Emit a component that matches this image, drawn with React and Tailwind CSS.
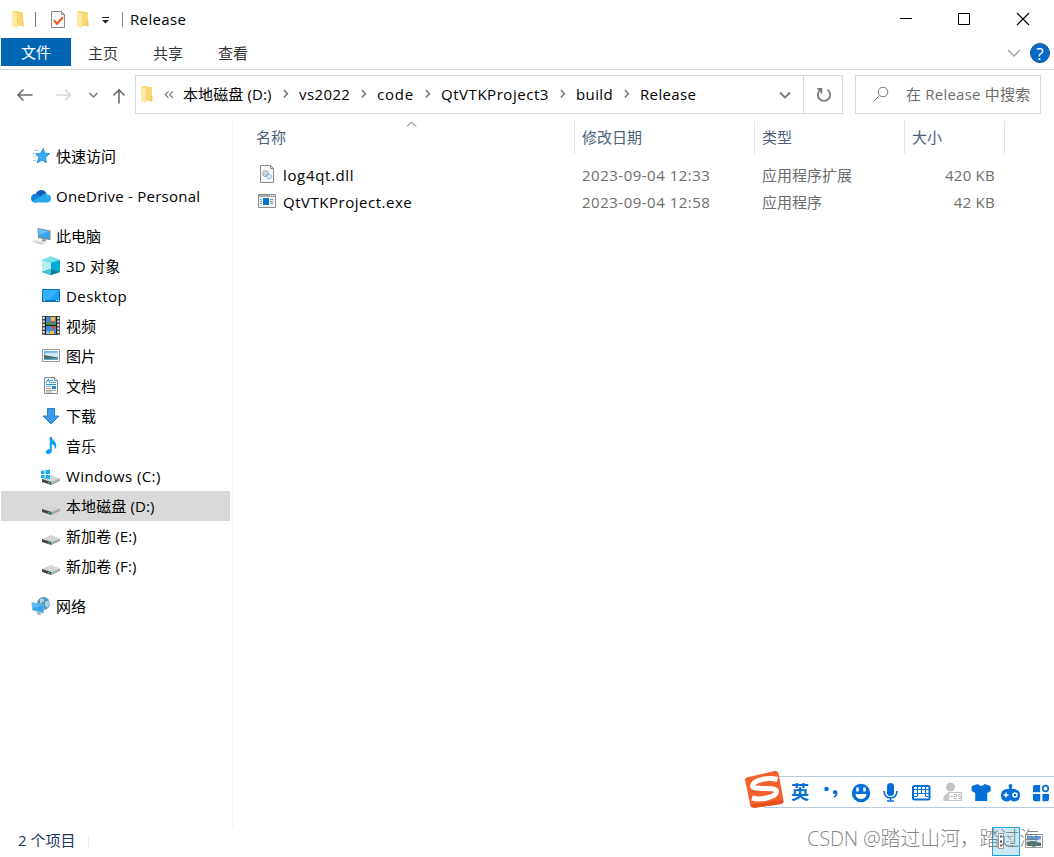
// src/App.jsx

const FolderIcon = () => (
  <svg width="13" height="19" viewBox="0 0 13 19" className="shrink-0">
    <path d="M1 1h5l1 1h4.500v14H6V4z" fill="#f0c75a" />
    <path d="M1 1h5l6 2v13H1z" fill="#f8d775" />
    <path d="M1 1l5 3v14.500L1 16z" fill="#ffe8a3" />
    <path d="M11 11h1.500v5.500H11z" fill="#efc55c" />
  </svg>
);

const TaskIcon = () => (
  <svg width="16" height="19" viewBox="0 0 16 19" className="shrink-0">
    <path d="M1.500 1.500h10l3 3v13h-13z" fill="#f7f7f7" stroke="#8a8a8a" />
    <path d="M11.500 1.500v3h3" fill="none" stroke="#8a8a8a" />
    <path d="M4 10.500l3 3.200 6-6.500" fill="none" stroke="#f05a1a" strokeWidth="2" />
  </svg>
);

const Chevron = () => (
  <svg width="27" height="12" viewBox="0 0 27 12" className="shrink-0">
    <path d="M11.800 2l3.700 3.700-3.700 3.700" fill="none" stroke="#777" strokeWidth="1.500" />
  </svg>
);

const StarIcon = () => (
  <svg width="20" height="20" viewBox="0 0 20 20">
    <path d="M12.500 2.500l1 4.700 5.300.3-4.300 3.500.8 5.700-4.200-2.600-5 2.900 1.800-5.700-3.300-3.500 4.700-.3z" fill="#3aaaf3" stroke="#1580c8" strokeWidth=".8" />
    <path d="M3 4.500h5M2 7.500h2.500M2.500 11h3M2 14.500h3" stroke="#9ccff2" />
  </svg>
);

const CloudIcon = () => (
  <svg width="20" height="20" viewBox="0 0 20 20">
    <path d="M5 7.500C6.500 3.500 13 2 15.500 7.500L12 13 4 12z" fill="#0b5cb8" />
    <path d="M0 12.500c0-3.500 3-5.500 6-4.500l7 5.500-8 3C2 16.500 0 15 0 12.500z" fill="#1480d8" />
    <path d="M9.500 10.500c2-3 5-3.500 6.500-2 3 0 4 2 4 4 0 2.500-1.700 4-4 4H4c-1.500 0-2.500-.7-3-1.500z" fill="#28a8ea" />
  </svg>
);

const PcIcon = () => (
  <svg width="20" height="20" viewBox="0 0 20 20">
    <path d="M6.500 2L19.500 4.500v9.800L7 12z" fill="#7b868e" />
    <path d="M7.500 3L18.500 5.300v7.700L8 11z" fill="#37a5ee" />
    <path d="M7.500 3L18.500 5.300 8 9z" fill="#66c2fb" />
    <path d="M12 13l3 .5v2l-5-.6z" fill="#8e989f" />
    <path d="M0 15.500l5-1.500 10 2.200-4 2.500z" fill="#c9ced2" />
    <path d="M2 15.800l3-.9 8 1.700" fill="none" stroke="#eee" />
  </svg>
);

const CubeIcon = () => (
  <svg width="20" height="20" viewBox="0 0 20 20">
    <path d="M1 4l9-3.500L19 4v12l-9 3-9-3z" fill="#33bfd0" />
    <path d="M1 4l9-3.500L19 4l-9 3z" fill="#77e2e6" />
    <path d="M1 4l9 3v6l-9 3z" fill="#b4eff0" />
    <path d="M19 4l-9 3v6l9 3z" fill="#05a9d6" />
    <path d="M1 16l9-3 9 3-9 3z" fill="#137c92" />
    <path d="M1 16l9-3v6z" fill="#43c9d2" />
  </svg>
);

const DesktopIcon = () => (
  <svg width="20" height="20" viewBox="0 0 20 20">
    <path d="M1.500 3.500h17v12h-17z" fill="#1ba1f9" stroke="#0873bd" />
    <path d="M2 4h16L8 14H2z" fill="#35b0ff" />
    <path d="M2 14h16v1.500H2z" fill="#0873bd" />
    <path d="M3 14.500h1m11 0h1m1 0h1" stroke="#fff" />
  </svg>
);

const VideoIcon = () => (
  <svg width="20" height="20" viewBox="0 0 20 20">
    <path d="M1 0h18v19H1z" fill="#4c4c4c" />
    <path d="M2.700 1v18M17.300 1v18" stroke="#e5e5e5" strokeWidth="2" strokeDasharray="2 1.500" />
    <path d="M5 1h10v8H5zM5 10h10v8H5z" fill="#4a86dc" />
    <path d="M4.500 0v19M15.500 0v19M4.500 9.500h11" stroke="#222" />
    <path d="M5 7l4-1 2 2 4-1v2H5z" fill="#43903b" />
    <path d="M10 1h4v4h-4zM9 15h4v3H9z" fill="#efc12b" />
    <path d="M10 5h3v2h-3zM11 10h3v3h-3z" fill="#e24b2c" />
    <path d="M5 16l2-1 2 3H5z" fill="#92c7ee" />
  </svg>
);

const PictureIcon = () => (
  <svg width="20" height="20" viewBox="0 0 20 20">
    <path d="M1.500 3.500h17v12h-17z" fill="#fff" stroke="#999" />
    <path d="M3 5h14v9H3z" fill="#6eb5ed" />
    <path d="M3 8.500c3-3 7-1 14-2V12H3z" fill="#cfe9f5" />
    <path d="M3 9l5 1 9 1.500V14H3z" fill="#416c67" />
    <path d="M3 13l14-1v2H3z" fill="#5fa5b8" />
  </svg>
);

const DocIcon = () => (
  <svg width="20" height="20" viewBox="0 0 20 20">
    <path d="M3.500 1.500h10l3 3v13h-13z" fill="#fafafa" stroke="#888" />
    <path d="M13.500 1.500v3h3" fill="#ddd" stroke="#888" />
    <path d="M5 7l2.500-4 1 4M9 4.500h3M10 6.500h5M5 8.500h10" fill="none" stroke="#1895dc" />
    <path d="M5 10.500h5M5 12.500h5M5 14.500h10M5 16h6" stroke="#a5a5a5" />
    <path d="M11 10h4v3h-4z" fill="#3189cb" />
  </svg>
);

const DownloadIcon = () => (
  <svg width="20" height="20" viewBox="0 0 20 20">
    <path d="M6.500 2.500h7v7.500h4.500L10 18 2 10h4.500z" fill="#3c9be9" stroke="#2078c4" strokeWidth=".9" />
  </svg>
);

const MusicIcon = () => (
  <svg width="20" height="20" viewBox="0 0 20 20">
    <path d="M8.800 1h2c.3 3.300 4.700 4.500 4.500 9-.1 1.400-.7 2.300-1.500 3 .3-3-.8-4.300-3-5v6.500c0 2.500-2 3.700-4 3.500-2-.2-2.500-2-1.300-3.500.9-1.200 2.300-1.500 3.300-1.200z" fill="#069df7" />
  </svg>
);

const DriveIcon = ({ windows }) => (
  <svg width="20" height="20" viewBox="0 0 20 20">
    <path d="M1 13l9-4 9 3.500-8.500 3.500z" fill="#d4d5d6" />
    <path d="M1 13l9.500 3v3L1 16z" fill="#3e4345" />
    <path d="M10.500 16l8.500-3.500V15l-8.500 4z" fill="#a4a7a9" />
    <path d="M7 16l2 .6v1.200L7 17z" fill="#36e34f" />
    {windows && (
      <path d="M0 5l3.500-.6V8H0zM4.500 4.200L9 3.500V8H4.500zM0 9h3.500v3.400L0 12zM4.500 9H9v4l-4.500-.6z" fill="#14b1ec" />
    )}
  </svg>
);

const NetworkIcon = () => (
  <svg width="20" height="20" viewBox="0 0 20 20">
    <circle cx="12.500" cy="7.500" r="6.500" fill="#5797bf" />
    <path d="M9 3c2-1 5 0 4 2s-3 1-4 3zM14 6l4-2 1 4-3 4-2-3z" fill="#a9d4e4" />
    <path d="M1 6.500L12.500 9v8L1.500 14z" fill="#35a4ed" stroke="#78bfe7" strokeWidth=".8" />
    <path d="M1.500 7L12 9.500 2 12z" fill="#5cbcf7" />
    <path d="M5 16.500l3-.5 3 2-3 1z" fill="#a3abb0" />
  </svg>
);

const DllIcon = () => (
  <svg width="20" height="20" viewBox="0 0 20 20">
    <path d="M3.500 .5h10l3 3v14h-13z" fill="#f8f8f8" stroke="#8b8b8b" />
    <path d="M13.500 .5v3h3" fill="none" stroke="#8b8b8b" />
    <circle cx="8.500" cy="8.500" r="2.700" fill="none" stroke="#8d969c" strokeWidth="1.500" strokeDasharray="1.300 .7" />
    <circle cx="8.500" cy="8.500" r="1" fill="none" stroke="#8d969c" strokeWidth=".7" />
    <circle cx="12" cy="11.500" r="2.200" fill="none" stroke="#78a9d0" strokeWidth="1.300" strokeDasharray="1.200 .6" />
  </svg>
);

const ExeIcon = () => (
  <svg width="20" height="20" viewBox="0 0 20 20">
    <path d="M1.500 2.500h17v13h-17z" fill="#f4f4f4" stroke="#8a8f94" />
    <path d="M2 3h16v2H2z" fill="#a5a9ad" />
    <path d="M13 3.500h1m1 0h1m1 0h1" stroke="#fff" />
    <path d="M6 6h6v7H6z" fill="#0877d2" />
    <path d="M3 7.500h2M3 9.500h2M3 11.500h2M13 7.500h3M13 9.500h3M13 11.500h3" stroke="#7893ab" />
  </svg>
);

const navItems = [
  { label: "快速访问", icon: <StarIcon />, cls: "ml-[31px] mb-[10px]" },
  { label: "OneDrive - Personal", icon: <CloudIcon />, cls: "ml-[31px] mb-[10px]", text: "tracking-[0.24px]" },
  { label: "此电脑", icon: <PcIcon />, cls: "ml-[31px]" },
  { label: "3D 对象", icon: <CubeIcon />, cls: "ml-[41px]", text: "tracking-[0.2px]" },
  { label: "Desktop", icon: <DesktopIcon />, cls: "ml-[41px]", text: "tracking-[0.45px]" },
  { label: "视频", icon: <VideoIcon />, cls: "ml-[41px]" },
  { label: "图片", icon: <PictureIcon />, cls: "ml-[41px]" },
  { label: "文档", icon: <DocIcon />, cls: "ml-[41px]" },
  { label: "下载", icon: <DownloadIcon />, cls: "ml-[41px]" },
  { label: "音乐", icon: <MusicIcon />, cls: "ml-[41px]" },
  { label: "Windows (C:)", icon: <DriveIcon windows />, cls: "ml-[41px]", text: "tracking-[0.4px]" },
  { label: "本地磁盘 (D:)", icon: <DriveIcon />, cls: "ml-[41px]", text: "tracking-[0.1px]", active: true },
  { label: "新加卷 (E:)", icon: <DriveIcon />, cls: "ml-[41px]", text: "tracking-[0.1px]" },
  { label: "新加卷 (F:)", icon: <DriveIcon />, cls: "ml-[41px] mb-[10px]", text: "tracking-[0.15px]" },
  { label: "网络", icon: <NetworkIcon />, cls: "ml-[31px]" },
];

const crumbs = [
  { label: "本地磁盘 (D:)", cls: "w-[89px] tracking-[0.1px]" },
  { label: "vs2022", cls: "w-[51px] tracking-[0.4px]" },
  { label: "code", cls: "w-[37px] tracking-[0.8px]" },
  { label: "QtVTKProject3", cls: "w-[108px] tracking-[0.54px]" },
  { label: "build", cls: "w-[37px] tracking-[0.4px]" },
  { label: "Release", cls: "w-[56px] tracking-[0.35px]" },
];

const files = [
  { name: "log4qt.dll", date: "2023-09-04 12:33", type: "应用程序扩展", size: "420 KB", icon: <DllIcon />, text: "tracking-[0.65px]" },
  { name: "QtVTKProject.exe", date: "2023-09-04 12:58", type: "应用程序", size: "42 KB", icon: <ExeIcon />, text: "tracking-[0.52px]" },
];

const TitleBar = () => (
  <div className="flex h-[38px] items-center pl-[11px]">
    <FolderIcon />
    <div className="ml-[11px] h-[15px] w-px bg-[#777]" />
    <div className="ml-[14px]"><TaskIcon /></div>
    <div className="ml-[10px]"><FolderIcon /></div>
    <svg width="8" height="8" viewBox="0 0 8 8" className="ml-[13px] mt-1">
      <path d="M0 .5h7" stroke="#222" />
      <path d="M0 3h7L3.500 6.500z" fill="#222" />
    </svg>
    <div className="ml-[12px] h-[15px] w-px bg-[#888]" />
    <span className="ml-[7px] flex-1 tracking-[0.35px]">Release</span>
    <svg width="136" height="14" viewBox="0 0 136 14" className="mr-[19px]">
      <path d="M1 6.500h12" stroke="#000" />
      <path d="M59.500 1.500h11v11h-11z" fill="none" stroke="#000" />
      <path d="M118 1l12 12M130 1l-12 12" stroke="#000" strokeWidth="1.100" />
    </svg>
  </div>
);

const RibbonTabs = () => (
  <div className="flex h-8 items-start border-b border-[#dadbdc] pl-px text-[#333]">
    <div className="flex h-7 w-[70px] items-center justify-center bg-[#0066b4] text-white">文件</div>
    <span className="ml-[17px] mt-[5px]">主页</span>
    <span className="ml-[35px] mt-[5px]">共享</span>
    <span className="ml-[35px] mt-[5px]">查看</span>
    <svg width="14" height="9" viewBox="0 0 14 9" className="ml-auto mt-[11px]">
      <path d="M1 1l6 6 6-6" fill="none" stroke="#a2a2a2" strokeWidth="1.300" />
    </svg>
    <div className="ml-[9px] mr-[4px] mt-[5px] flex size-5 items-center justify-center rounded-full border border-[#0a56a0] bg-[#0669c8] text-[17px] font-medium leading-none text-white">?</div>
  </div>
);

const AddressBar = () => (
  <div className="flex h-[44px] pt-[5px]">
    <svg width="135" height="39" viewBox="0 0 135 39" className="shrink-0">
      <path d="M18 20h14.500M23.500 14.500L18 20l5.500 5.500" fill="none" stroke="#6b6b6b" strokeWidth="1.600" />
      <path d="M56 20h14.500M65 14.500l5.500 5.500-5.500 5.500" fill="none" stroke="#d5d5d5" strokeWidth="1.600" />
      <path d="M89.500 18l4 4 4-4" fill="none" stroke="#777" strokeWidth="1.500" />
      <path d="M119 28.500v-13M113.500 20.500l5.500-5.500 5.500 5.500" fill="none" stroke="#6b6b6b" strokeWidth="1.600" />
    </svg>
    <div className="flex h-[39px] w-[708px] shrink-0 items-center border border-[#d9d9d9] pl-[4px]">
      <div className="-mt-px"><FolderIcon /></div>
      <svg width="10" height="10" viewBox="0 0 10 10" className="ml-[11px] mr-[9px] shrink-0">
        <path d="M4.500 1.500L1.300 4.700l3.200 3.200M8.700 1.500L5.500 4.700l3.200 3.200" fill="none" stroke="#777" strokeWidth="1.100" />
      </svg>
      {crumbs.map((c, i) => (
        <div key={c.label} className="flex items-center whitespace-nowrap pb-0.5">
          {i > 0 && <Chevron />}
          <span className={c.cls}>{c.label}</span>
        </div>
      ))}
      <svg width="12" height="9" viewBox="0 0 12 9" className="ml-auto mr-[12px] mt-0.5">
        <path d="M1 1.500l5 5 5-5" fill="none" stroke="#777" strokeWidth="1.800" />
      </svg>
      <div className="flex h-full w-[39px] items-center justify-center border-l border-[#d9d9d9] pl-px">
        <svg width="18" height="18" viewBox="0 0 18 18">
          <path d="M12.500 3.700A6.200 6.200 0 1 1 5.500 3.700M6.400 7.500V2.900H2.300" fill="none" stroke="#777" strokeWidth="1.700" />
        </svg>
      </div>
    </div>
    <div className="ml-[12px] flex h-[39px] w-[186px] items-center border border-[#d9d9d9] pb-0.5 pl-[16px] text-[#6d6d6d]">
      <svg width="18" height="18" viewBox="0 0 18 18" className="mr-[16px] shrink-0">
        <circle cx="11" cy="7" r="4.800" fill="none" stroke="#777" />
        <path d="M7.500 10.500L1.500 16.500" stroke="#777" />
      </svg>
      <span className="whitespace-nowrap tracking-[0.22px]">在 Release 中搜索</span>
    </div>
  </div>
);

const Sidebar = () => (
  <div className="w-[233px] shrink-0 border-r border-[#f3f3f3] pl-px pt-5">
    {navItems.map((item) => (
      <div key={item.label} className={item.active ? "w-[229px] bg-[#d9d9d9]" : "w-[229px]"}>
        <div className={`flex h-[30px] items-center ${item.cls} -translate-x-px whitespace-nowrap`}>
          {item.icon}
          <span className={`ml-[5px] ${item.text || ""}`}>{item.label}</span>
        </div>
      </div>
    ))}
  </div>
);

const FileList = () => (
  <div className="relative flex-1">
    <div className="flex h-[33px] items-center text-[#4c607a]">
      <div className="flex h-full w-[342px] items-center border-r border-[#e5e5e5] pb-0.5 pl-[23px]">名称</div>
      <div className="flex h-full w-[180px] items-center border-r border-[#e5e5e5] pb-0.5 pl-[7px]">修改日期</div>
      <div className="flex h-full w-[150px] items-center border-r border-[#e5e5e5] pb-0.5 pl-[7px]">类型</div>
      <div className="flex h-full w-[100px] items-center border-r border-[#e5e5e5] pb-0.5 pl-[7px]">大小</div>
    </div>
    <svg width="11" height="7" viewBox="0 0 11 7" className="absolute left-[173px] top-0">
      <path d="M1 5.500L5.500 1 10 5.500" fill="none" stroke="#666" />
    </svg>
    <div className="pt-[7px]">
      {files.map((f) => (
        <div key={f.name} className="flex h-[27px] items-center whitespace-nowrap text-[#6d6d6d]">
          <div className="flex w-[349px] items-center pl-[25px] text-black">
            <div className="-ml-px">{f.icon}</div>
            <span className={`ml-[6px] ${f.text}`}>{f.name}</span>
          </div>
          <span className="w-[180px] tracking-[0.5px]">{f.date}</span>
          <span className="w-[143px]">{f.type}</span>
          <span className="w-[90px] text-right tracking-[0.25px]">{f.size}</span>
        </div>
      ))}
    </div>
  </div>
);

const StatusBar = () => (
  <div className="flex h-[30px] items-center pl-[18px] text-[#1e395b]">
    <span className="w-[70px] pb-1">2 个项目</span>
    <div className="h-[13px] w-px bg-[#eee]" />
    <div className="ml-auto flex h-[29px] w-7 -translate-y-px items-center justify-center border border-[#26a0da] bg-[#cbe8f6]">
      <svg width="18" height="18" viewBox="0 0 18 18">
        <path d="M1.500 1.500h5v15h-5z" fill="#fff" stroke="#999" />
        <path d="M3 4.500h2M3 9.500h2" stroke="#444" strokeWidth="2" />
        <path d="M3 13.500h2" stroke="#d34a25" strokeWidth="2" />
        <path d="M9 4.500h3m1 0h3M9 9.500h3m1 0h3M9 13.500h3m1 0h3" stroke="#9aa8b0" />
      </svg>
    </div>
    <svg width="18" height="15" viewBox="0 0 18 15" className="mb-0.5 ml-[5px] mr-[11px]">
      <path d="M.5 .5h17v13H.5z" fill="#fff" stroke="#999" />
      <path d="M2 2h14v5H2z" fill="#5c9fe8" />
      <path d="M2 6c4-2 8 1 14-1v5H2z" fill="#cfe9f5" />
      <path d="M2 8l6-1 8 2v3H2z" fill="#446f6c" />
    </svg>
  </div>
);

const ImeBar = () => (
  <div className="absolute left-[744px] top-[769px] h-[40px] w-[310px]">
    <div className="ml-[20px] mt-[7px] flex h-[32px] items-center border-y border-[#b5cde3] bg-white pl-[27px] text-[#026fd9]">
      <span className="text-[18px] font-bold leading-none">英</span>
    </div>
    <svg width="310" height="40" viewBox="0 0 310 40" className="absolute left-0 top-0">
      <path d="M2.500 8.500Q1 9 1 10.500L6.500 37Q7.500 39 10 38.800L37 35Q40 34 39.500 31.500L34.500 4Q33.500 1.500 30.500 2z" fill="#f2602b" />
      <path d="M6 36l32-5 1.500 1q0 2-2.500 3l-26 3.800Q7.500 39 6 36z" fill="#e5501d" />
      <path d="M33.500 10.500C24 7.500 8.500 11.500 8.500 17 8.500 22 32 16.500 32.500 22.500 33 28 17 31.500 8 29" fill="none" stroke="#fff" strokeWidth="5" />
      <g fill="#026fd9">
        <circle cx="82.500" cy="20" r="2.300" />
        <path d="M89.500 21.500q4-1 4 2.200 0 3.600-3.500 5l-.6-1q2-1.200 2-2.500-2.500 0-2.500-1.900 0-1.300.6-1.800z" />
        <circle cx="117" cy="24" r="9.200" />
        <rect x="143" y="14" width="7" height="13" rx="3.500" />
        <path d="M234 15q3 4 6.500 0l6 2 .2 5-3.500 2v8h-12v-8l-3.500-2v-5z" />
        <path d="M257 26q0-6.500 9.500-6.500T276 26t-6 6.500q-1.500 0-3.500-1.500-2 1.500-3.500 1.500-6 0-6-6.500z" />
        <path d="M265.500 17h2v3h-2z" />
        <circle cx="266.500" cy="17" r="2" />
        <path d="M289 18q0-2 2-2h5.200v7.300H289zM289 25h7.200v7.300H291q-2 0-2-2zM298.500 25h6.500v5.300q0 2-2 2h-4.500z" />
      </g>
      <path d="M113.500 22.500v-4M120.500 22.500v-4" stroke="#fff" strokeWidth="2.500" />
      <path d="M111.500 25h11q-.5 5-5.500 5t-5.500-5z" fill="#fff" />
      <path d="M140 22q.5 7 6.500 7t6.500-7M146.500 29v3M143 32h7" fill="none" stroke="#026fd9" strokeWidth="1.700" />
      <rect x="169" y="17" width="16.500" height="13.500" rx="1.500" fill="#fff" stroke="#026fd9" strokeWidth="2" />
      <path d="M170 20.500h15M170 24.500h15M173.500 18v9M177.500 18v6.500M181.500 18v9M170 27.500h3.500M181.500 27.500h3" fill="none" stroke="#026fd9" strokeWidth="1.100" />
      <path d="M259.500 26h5M262 23.500v5" stroke="#fff" strokeWidth="1.500" />
      <circle cx="271" cy="26" r="2" fill="none" stroke="#fff" strokeWidth="1.500" />
      <circle cx="301.500" cy="19.500" r="2.800" fill="none" stroke="#026fd9" strokeWidth="1.700" />
      <g fill="#c4c4c4">
        <circle cx="206.500" cy="18" r="4.500" />
        <path d="M199.500 32q-1-8 7-8h2v8z" />
        <path d="M204.500 23.500h13v8h-13z" fill="#fff" stroke="#c4c4c4" strokeWidth="1.200" />
        <path d="M204.500 27.500h4.500M209.500 25.500h3v2h-2.500v2h3M217 25.500h-2.500v2h2v2h-2.500" fill="none" stroke="#c4c4c4" />
      </g>
    </svg>
  </div>
);

const App = () => {
  return (
    <div className="relative flex h-[857px] w-[1054px] flex-col overflow-hidden bg-white font-['Open_Sans','Noto_Sans_CJK_SC',sans-serif] text-[15px] leading-5 text-black">
      <TitleBar />
      <RibbonTabs />
      <AddressBar />
      <div className="flex h-[713px] pt-[7px]">
        <Sidebar />
        <FileList />
      </div>
      <StatusBar />
      <ImeBar />
      <span className="absolute left-[807px] top-[827px] whitespace-nowrap text-[20px] font-light leading-6 tracking-[-0.2px] text-[#777]/90">CSDN @踏过山河，踏过海</span>
    </div>
  );
};

export default App;
